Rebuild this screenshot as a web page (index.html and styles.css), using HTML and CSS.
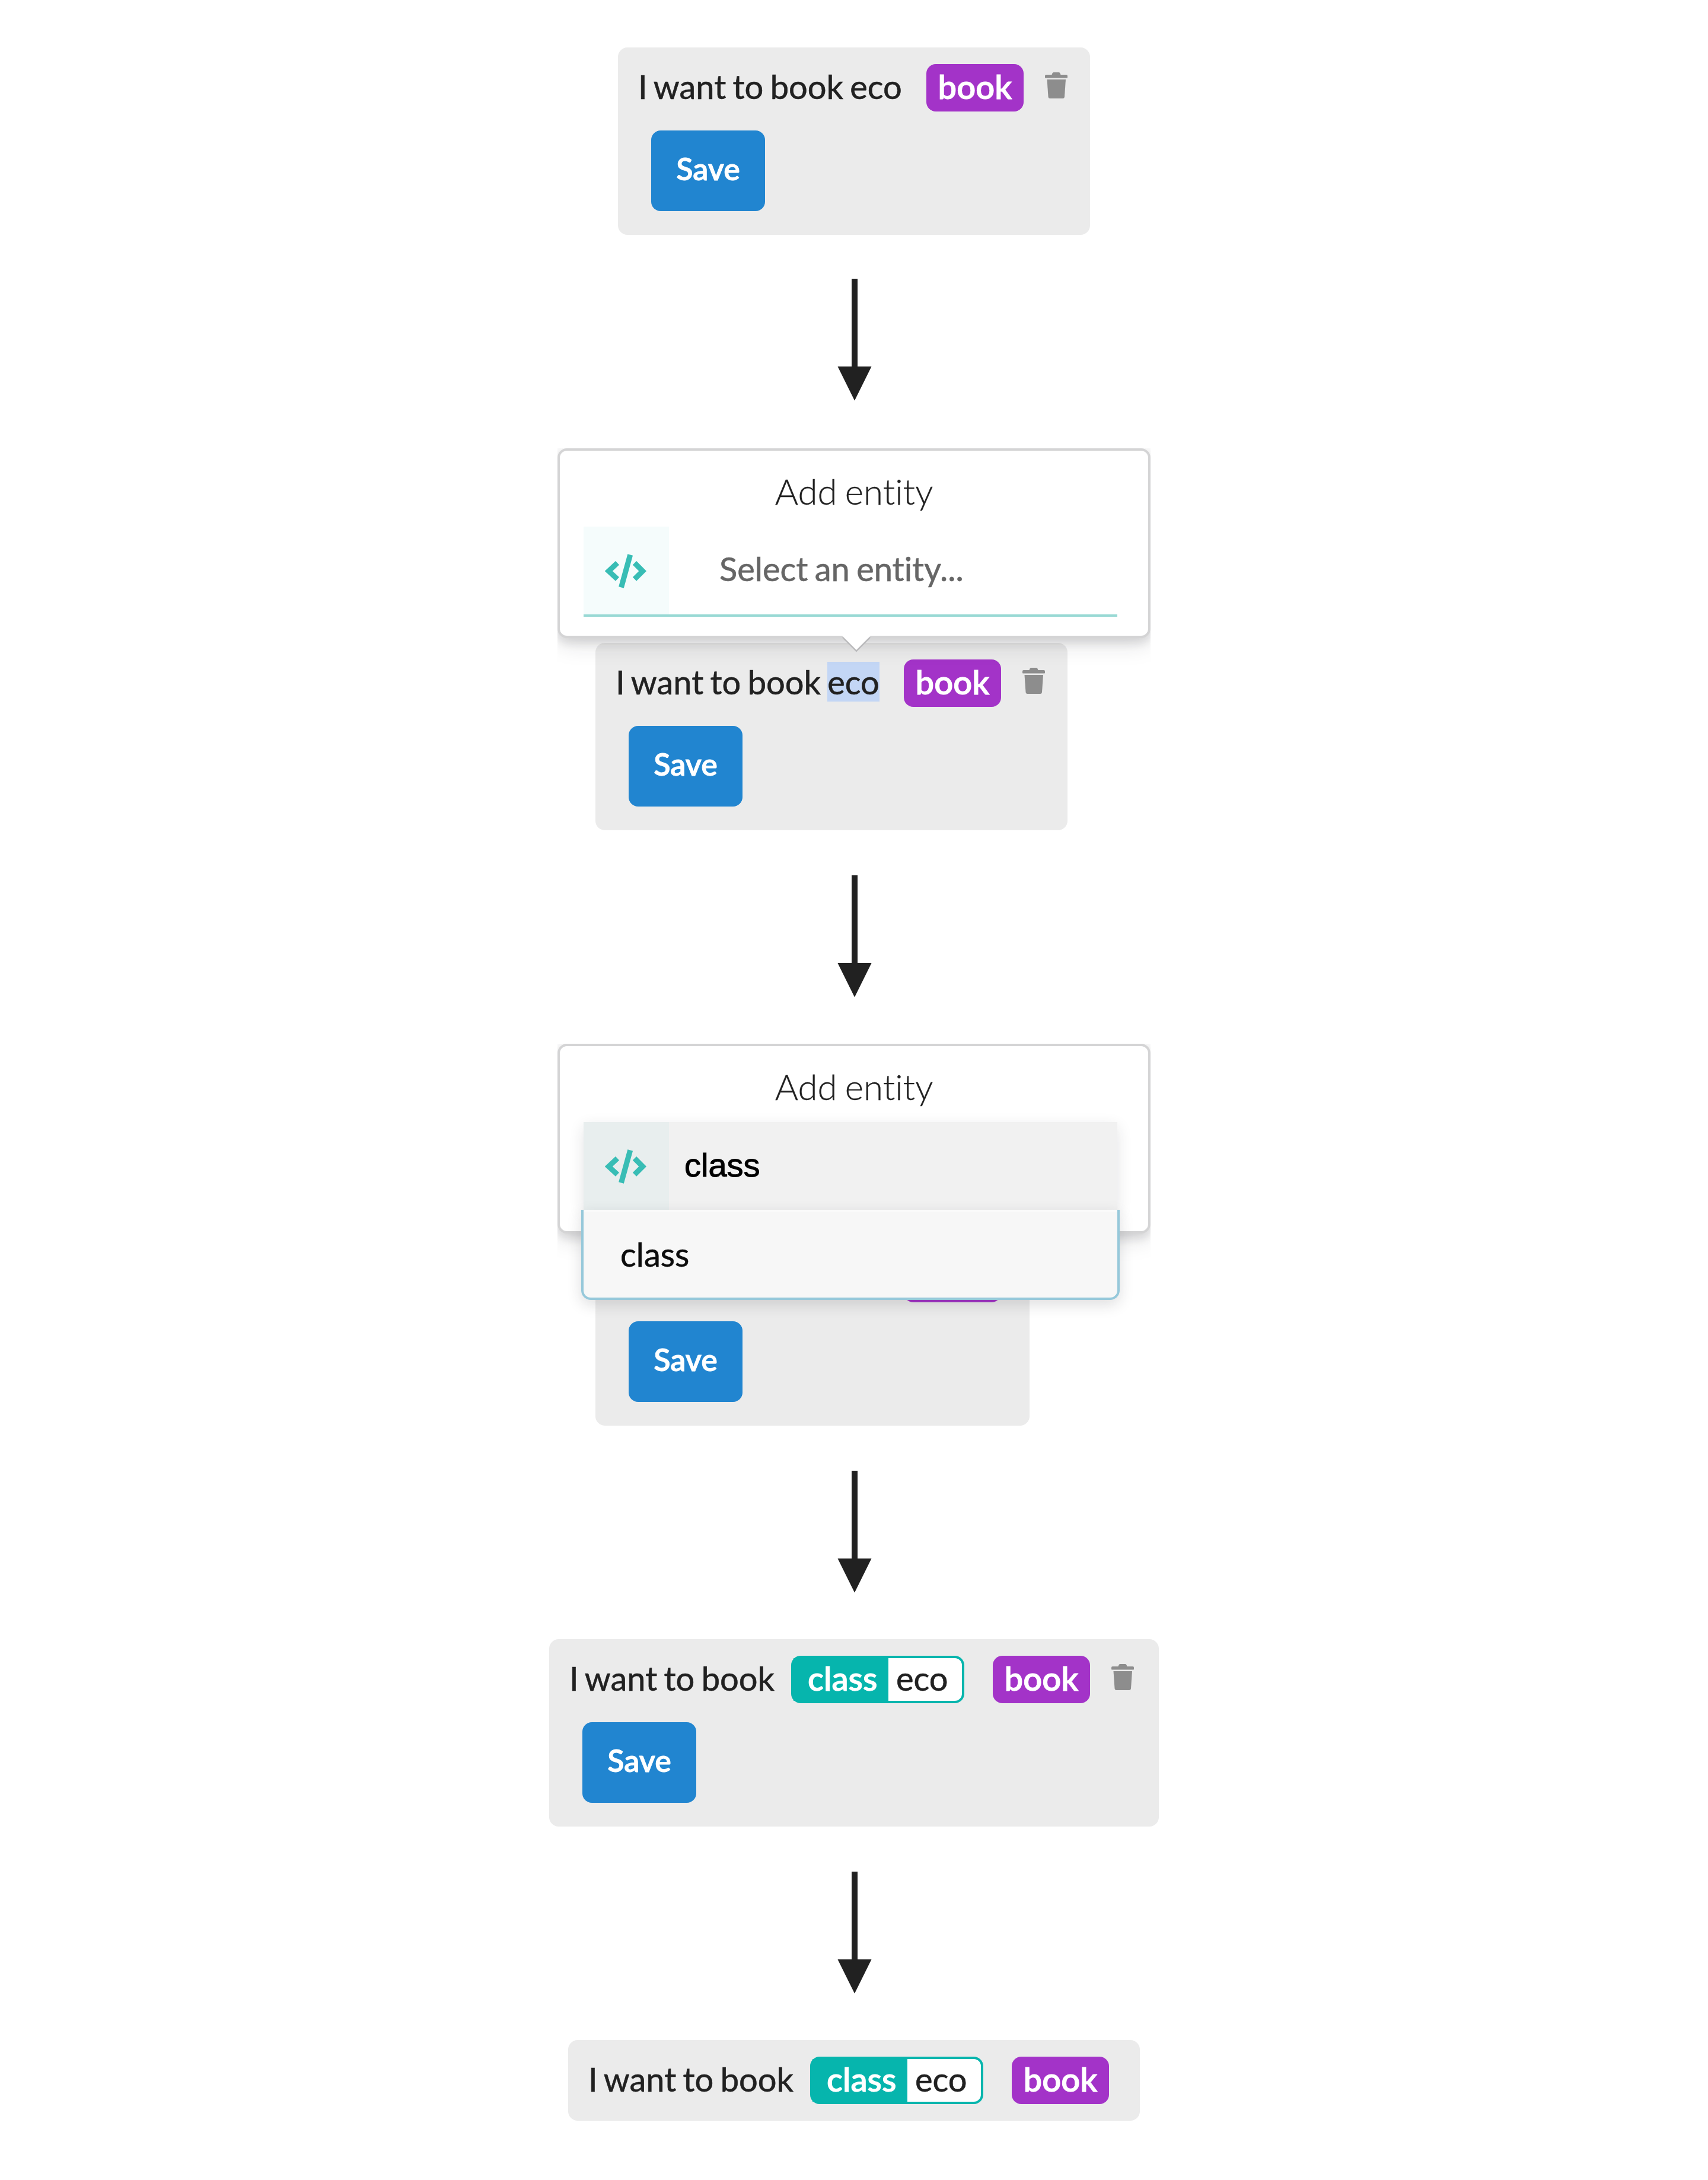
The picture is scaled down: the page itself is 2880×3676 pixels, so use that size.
FILE: index.html
```html
<!DOCTYPE html>
<html lang="en">
<head>
<meta charset="utf-8">
<title>Adding an entity</title>
<link rel="stylesheet" href="styles.css">
</head>
<body>
<svg class="defs" aria-hidden="true">
  <symbol id="trash" viewBox="0 0 38 44">
    <path d="M2 4H11.500L12.500 1.500Q13 0 14.500 0H23.500Q25 0 25.500 1.500L26.500 4H36Q38 4 38 6V8.500Q38 9.500 37 9.500H1Q0 9.500 0 8.500V6Q0 4 2 4Z"/>
    <path d="M3.500 12H35L33 41Q32.700 44 30 44H8.500Q5.800 44 5.500 41Z"/>
  </symbol>
  <symbol id="code" viewBox="0 0 70 58">
    <path d="M42.700 1.500 27.500 56.500M21 15.300 6.300 29 21 42.500M50 15.300 63.700 29 50 42.500" fill="none" stroke="currentColor" stroke-width="9"/>
  </symbol>
  <symbol id="arrow" viewBox="0 0 58 206">
    <path d="M24 0H34V148H57.500L29 205.500.500 148H24Z"/>
  </symbol>
</svg>
<main class="flow">
  <section class="card card-first">
    <div class="line"><span class="text">I want to book eco</span><span class="intent">book</span><svg class="trash"><use href="#trash"/></svg></div>
    <button class="save">Save</button>
  </section>

  <svg class="arrow arrow-first"><use href="#arrow"/></svg>

  <section class="step">
    <div class="popup">
      <h2 class="title">Add entity</h2>
      <div class="select"><span class="icon"><svg class="code"><use href="#code"/></svg></span><span class="placeholder">Select an entity...</span></div>
      <i class="pointer"></i>
    </div>
    <div class="card">
      <div class="line"><span class="text">I want to book <mark class="mark">eco</mark></span><span class="intent">book</span><svg class="trash"><use href="#trash"/></svg></div>
      <button class="save">Save</button>
    </div>
  </section>

  <svg class="arrow"><use href="#arrow"/></svg>

  <section class="step">
    <div class="popup">
      <h2 class="title">Add entity</h2>
      <div class="select select-open"><span class="icon"><svg class="code"><use href="#code"/></svg></span><span class="query">class</span>
        <div class="menu">class</div>
      </div>
    </div>
    <div class="card card-narrow">
      <div class="line"><span class="intent"></span></div>
      <button class="save">Save</button>
    </div>
  </section>

  <svg class="arrow"><use href="#arrow"/></svg>

  <section class="card card-wide">
    <div class="line"><span class="text">I want to book</span><span class="entity"><b class="name">class</b><span class="value">eco</span></span><span class="intent">book</span><svg class="trash"><use href="#trash"/></svg></div>
    <button class="save">Save</button>
  </section>

  <svg class="arrow"><use href="#arrow"/></svg>

  <section class="card card-final">
    <div class="line"><span class="text">I want to book</span><span class="entity"><b class="name">class</b><span class="value">eco</span></span><span class="intent">book</span></div>
  </section>
</main>
</body>
</html>
```
FILE: styles.css
```css
* { box-sizing: border-box; }
body {
  margin: 0;
  background: #fff;
  color: #212121;
  font: 56px/76px Lato, sans-serif;
  font-variant-ligatures: none;
  word-spacing: -3px;
}
.defs { position: absolute; width: 0; height: 0; }
.flow {
  display: flex;
  flex-direction: column;
  align-items: center;
  padding-top: 80px;
  height: 3676px;
}
.card {
  width: 796px;
  height: 316px;
  padding: 28px 34px;
  border-radius: 16px;
  background: #ebebeb;
}
.card-narrow { width: 732px; }
.card-wide { width: 1028px; }
.card-final { width: 964px; height: 136px; }
.line { display: flex; height: 80px; white-space: nowrap; }
.text { margin-right: auto; -webkit-text-stroke: .6px; }
.intent {
  width: 164px;
  border-radius: 16px;
  background: #a333c8;
  color: #fff;
  font-weight: 600;
  text-align: center;
  -webkit-text-stroke: .9px;
}
.card-final .intent { margin-right: 18px; }
.card-narrow .intent { margin: 0 14px 0 auto; }
.entity {
  display: flex;
  width: 292px;
  margin-right: 48px;
  border: 4px solid #06b5ad;
  border-radius: 16px;
  background: #fff;
  line-height: 68px;
}
.name {
  width: 160px;
  padding-left: 24px;
  background: #06b5ad;
  color: #fff;
  font-weight: 600;
  -webkit-text-stroke: .9px;
}
.value { padding-left: 13px; -webkit-text-stroke: .6px; }
.trash { width: 38px; height: 44px; margin: 14px 4px 0 36px; fill: #8d8d8d; }
.card-wide .trash { margin-right: 8px; }
.save {
  display: block;
  width: 192px;
  height: 136px;
  margin: 32px 0 0 22px;
  padding: 0 0 8px;
  border: 0;
  border-radius: 16px;
  background: #2185d0;
  color: #fff;
  font: 600 52px/128px Lato, sans-serif;
  -webkit-text-stroke: .9px;
}
.arrow { flex: none; width: 58px; height: 206px; margin: 76px 0 78px 2px; fill: #212121; }
.arrow-first { margin: 74px 0 80px 2px; }
.step {
  display: flex;
  flex-direction: column;
  width: 1000px;
  overflow: hidden;
}
.step .card { margin: 8px 0 0 64px; }
.popup {
  position: relative;
  z-index: 1;
  height: 320px;
  padding: 28px 40px 0;
  border: 4px solid #d4d4d5;
  border-radius: 16px;
  background: #fff;
  box-shadow: 0 8px 16px rgba(34,36,38,.12), 0 8px 40px rgba(34,36,38,.15);
}
.title {
  margin: 0 0 20px;
  font-size: 60px;
  font-weight: 300;
  line-height: 80px;
  text-align: center;
  -webkit-text-stroke: .3px;
}
.select {
  position: relative;
  display: flex;
  width: 900px;
  height: 152px;
  border-bottom: 4px solid #98d9d4;
}
.icon {
  display: flex;
  width: 144px;
  padding: 2px 2px 0 0;
  align-items: center;
  justify-content: center;
  background: #f5fcfc;
}
.code { width: 70px; height: 58px; color: #38bdb5; }
.placeholder { margin-left: 85px; color: #666; line-height: 142px; -webkit-text-stroke: .6px; }
.select-open {
  height: 148px;
  border: 0;
  background: #f1f1f1;
  box-shadow: 0 8px 24px rgba(34,36,38,.12);
}
.select-open .icon { background: #e8eeee; }
.query { margin-left: 26px; color: #000; font-family: "Liberation Sans", sans-serif; line-height: 145px; -webkit-text-stroke: 1px; }
.menu {
  position: absolute;
  top: 148px;
  left: -4px;
  width: 908px;
  height: 152px;
  padding-left: 62px;
  border: 4px solid #96c8da;
  border-top: 0;
  border-radius: 0 0 16px 16px;
  background: linear-gradient(#fafafa 4px, #f7f7f7 4px);
  box-shadow: 0 8px 24px rgba(34,36,38,.15);
  color: #0d0d0d;
  line-height: 150px;
  -webkit-text-stroke: .6px;
}
.pointer {
  position: absolute;
  left: 483px;
  bottom: -17px;
  width: 34px;
  height: 34px;
  background: #fff;
  box-shadow: 2.5px 2.5px 0 #bababc;
  transform: rotate(45deg);
}
.mark { background: #c3d6f5; color: inherit; }
```
